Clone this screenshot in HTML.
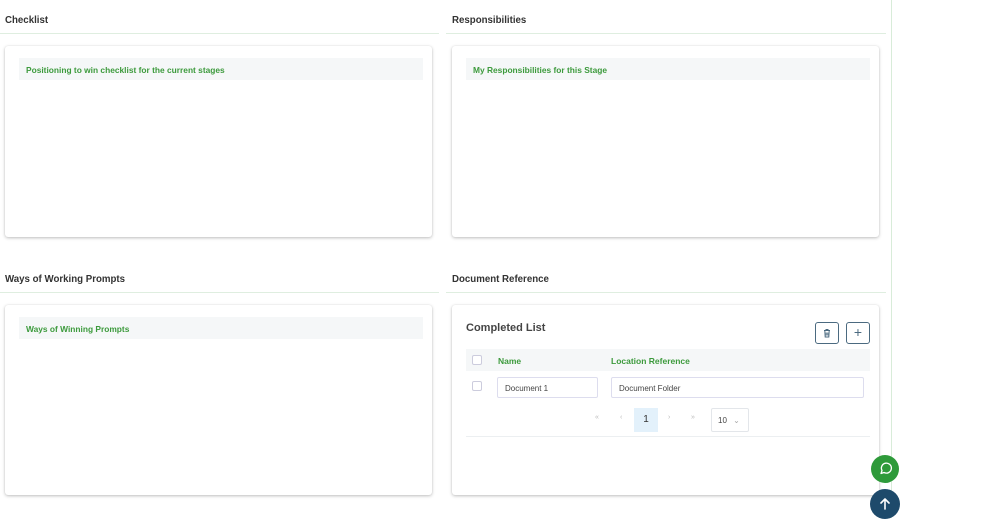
<!DOCTYPE html>
<html><head><style>
*{box-sizing:border-box;margin:0;padding:0}
body{width:1000px;height:518px;background:#fff;font-family:"Liberation Sans",sans-serif;position:relative;overflow:hidden}
.h{position:absolute;font-size:9.7px;font-weight:bold;color:#333}
.ln{position:absolute;height:1px;background:#dfeee0}
.card{position:absolute;background:#fff;border-radius:3px;box-shadow:0 1px 3px rgba(0,0,0,.25),0 0 1px rgba(0,0,0,.1)}
.bar{position:absolute;left:14px;right:9px;top:12px;height:22px;background:#f5f7f8;color:#3c9a3c;font-size:8.4px;font-weight:bold;padding:7px 0 0 7px}
.abs{position:absolute}
.btn{position:absolute;width:24px;height:22px;border:1px solid #4b6a80;border-radius:3px;background:#fff;color:#4b6a80;text-align:center;font-size:14px;line-height:19px}
.cb{position:absolute;width:10px;height:10px;border:1px solid #ccd;border-radius:2px;background:#fff}
.inp{position:absolute;height:21px;border:1px solid #dde;border-radius:2px;font-size:8px;color:#444;padding:6px 0 0 7px}
</style></head><body>
<div class="abs" style="left:891px;top:0;width:1px;height:518px;background:#d8ecd9"></div>

<div class="h" style="left:5px;top:15px">Checklist</div>
<div class="ln" style="left:0;top:33px;width:439px"></div>
<div class="h" style="left:452px;top:15px">Responsibilities</div>
<div class="ln" style="left:446px;top:33px;width:440px"></div>
<div class="h" style="left:5px;top:274px">Ways of Working Prompts</div>
<div class="ln" style="left:0;top:292px;width:439px"></div>
<div class="h" style="left:452px;top:274px">Document Reference</div>
<div class="ln" style="left:446px;top:292px;width:440px"></div>

<div class="card" style="left:5px;top:46px;width:427px;height:191px"><div class="bar">Positioning to win checklist for the current stages</div></div>
<div class="card" style="left:452px;top:46px;width:427px;height:191px"><div class="bar">My Responsibilities for this Stage</div></div>
<div class="card" style="left:5px;top:305px;width:427px;height:190px"><div class="bar">Ways of Winning Prompts</div></div>
<div class="card" style="left:452px;top:305px;width:427px;height:190px">
  <div class="abs" style="left:14px;top:17px;font-size:11px;font-weight:bold;color:#444">Completed List</div>
  <div class="btn" style="left:363px;top:17px"><svg width="10" height="10" viewBox="0 0 10 10" style="margin-top:5px"><path d="M2 2.5h6M4 2.5V1.5h2v1M2.8 2.5l.4 6.5h3.6l.4-6.5M4.2 4.5v3M5.8 4.5v3" fill="none" stroke="#4b6a80" stroke-width="1"/></svg></div>
  <div class="btn" style="left:394px;top:17px">+</div>
  <div class="abs" style="left:14px;top:44px;width:404px;height:22px;background:#f5f7f8"></div>
  <div class="cb" style="left:20px;top:50px"></div>
  <div class="abs" style="left:46px;top:51px;font-size:8.5px;font-weight:bold;color:#3c9a3c">Name</div>
  <div class="abs" style="left:159px;top:51px;font-size:8.5px;font-weight:bold;color:#3c9a3c">Location Reference</div>
  <div class="cb" style="left:20px;top:76px"></div>
  <div class="inp" style="left:45px;top:72px;width:101px">Document 1</div>
  <div class="inp" style="left:159px;top:72px;width:253px">Document Folder</div>
  <div class="abs" style="left:143px;top:109px;font-size:7px;color:#bbb">«</div>
  <div class="abs" style="left:168px;top:109px;font-size:7px;color:#bbb">‹</div>
  <div class="abs" style="left:182px;top:103px;width:24px;height:24px;background:#e3f1fb;color:#333;font-size:10px;text-align:center;line-height:24px">1</div>
  <div class="abs" style="left:216px;top:109px;font-size:7px;color:#bbb">›</div>
  <div class="abs" style="left:239px;top:109px;font-size:7px;color:#bbb">»</div>
  <div class="abs" style="left:259px;top:103px;width:38px;height:24px;border:1px solid #e3e6ea;border-radius:2px;font-size:8px;color:#444;padding:7px 0 0 6px">10 <span style="color:#aaa;margin-left:4px">⌄</span></div>
  <div class="abs" style="left:14px;top:131px;width:404px;height:1px;background:#eceff1"></div>
</div>

<div class="abs" style="left:871px;top:455px;width:28px;height:28px;border-radius:50%;background:#2e9a3a"><svg width="28" height="28" viewBox="0 0 28 28"><path d="M10 18.5l1-3a5 5 0 1 1 2 2z" fill="none" stroke="#fff" stroke-width="1.3" stroke-linejoin="round"/></svg></div>
<div class="abs" style="left:870px;top:489px;width:30px;height:30px;border-radius:50%;background:#1e4a6b"><svg width="30" height="30" viewBox="0 0 30 30"><path d="M15 20V10M11 14l4-4 4 4" fill="none" stroke="#fff" stroke-width="1.6" stroke-linecap="round" stroke-linejoin="round"/></svg></div>
</body></html>
